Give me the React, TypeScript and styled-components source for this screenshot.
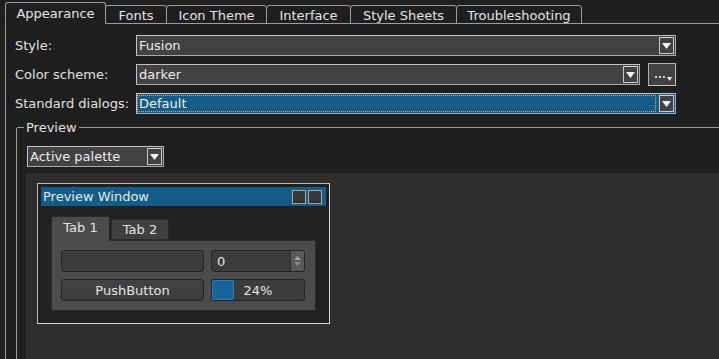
import React from "react";
import styled, { createGlobalStyle } from "styled-components";

const GlobalStyle = createGlobalStyle`
    html, body {
        margin: 0;
        padding: 0;
        background: #201f20;
        overflow: hidden;
    }

    body {
        font-family: "DejaVu Sans", "Liberation Sans", sans-serif;
        font-size: 13px;
        color: #e2e2e2;
    }
`;

const Page = styled.div`
    width: 719px;
    height: 359px;
    box-sizing: border-box;
    padding: 3px 0 0 5px;
    display: flex;
    flex-direction: column;
    overflow: hidden;
`;

const TabBar = styled.div`
    display: flex;
    align-items: flex-end;
    height: 21px;
    margin-bottom: -1px;
    position: relative;
    z-index: 1;
`;

const Tab = styled.div<{ active?: boolean; w: number }>`
    box-sizing: border-box;
    width: ${(p): number => p.w}px;
    height: ${(p): string => (p.active ? "22px" : "19px")};
    margin-left: -1px;
    border: 1px solid #9c9c9c;
    border-bottom: ${(p): string => (p.active ? "1px solid #201f20" : "1px solid #9c9c9c")};
    border-radius: 3px 3px 0 0;
    background: #201f20;
    display: flex;
    align-items: center;
    justify-content: center;
    line-height: 15px;
    padding-top: ${(p): string => (p.active ? "1px" : "2px")};
    color: #e4e4e4;

    &:first-child {
        margin-left: 0;
    }
`;

const Pane = styled.div`
    flex: 1;
    border-left: 1px solid #9c9c9c;
    border-top: 1px solid #9c9c9c;
    padding-top: 11px;
    display: flex;
    flex-direction: column;
`;

const FormGrid = styled.div`
    display: grid;
    grid-template-columns: 121px 1fr;
    row-gap: 7px;
    padding: 0 43px 0 9px;
    align-items: center;
`;

const Label = styled.div`
    line-height: 21px;
    color: #e0e0e0;
`;

const FieldRow = styled.div`
    display: flex;
    gap: 8px;
    align-items: center;
`;

const ComboBox = styled.div<{ selected?: boolean; w?: number }>`
    box-sizing: border-box;
    height: 21px;
    ${(p): string => (p.w ? `width: ${p.w}px;` : "flex: 1;")}
    border: 1px solid #c4c4c4;
    border-right-color: #aaaaaa;
    border-bottom-color: #aaaaaa;
    background: ${(p): string => (p.selected ? "#135e88" : "#434243")};
    display: flex;
    align-items: stretch;
    padding: 1px;
`;

const ComboText = styled.div<{ focus?: boolean }>`
    flex: 1;
    display: flex;
    align-items: center;
    padding-left: 1px;
    line-height: 15px;
    color: #ececec;
    border: 1px dotted ${(p): string => (p.focus ? "#e0a070" : "transparent")};
    margin: 0 3px 0 -1px;
`;

const ArrowBox = styled.div`
    box-sizing: border-box;
    width: 15px;
    border: 1px solid #c8c8c8;
    border-top-color: #d6d6d6;
    background: #434243;
    display: flex;
    align-items: center;
    justify-content: center;
`;

const DotsButton = styled.div`
    box-sizing: border-box;
    width: 28px;
    height: 23px;
    border: 1px solid #c4c4c4;
    border-top-color: #b0b0b0;
    border-left-color: #b0b0b0;
    background: #434243;
    display: flex;
    align-items: flex-end;
    justify-content: flex-end;
    padding: 0 3px 4px 0;
    gap: 1px;
`;

const Dot = styled.span`
    width: 2px;
    height: 2px;
    margin: 0 1px 3px 0;
    background: #cfcfcf;
`;

const Group = styled.div`
    margin: 14px 0 0 10px;
    border-left: 1px solid #9c9c9c;
    flex: 1;
    display: flex;
    flex-direction: column;
    padding-left: 9px;
`;

const GroupHeader = styled.div`
    display: flex;
    align-items: center;
    height: 15px;
    margin: -8px 0 0 -9px;
    line-height: 15px;

    &::before {
        content: "";
        width: 7px;
        border-top: 1px solid #9c9c9c;
    }

    &::after {
        content: "";
        flex: 1;
        border-top: 1px solid #9c9c9c;
    }
`;

const GroupTitle = styled.span`
    padding: 0 2px;
    color: #e0e0e0;
`;

const PaletteRow = styled.div`
    margin: 11px 0 0 1px;
    display: flex;
`;

const PreviewArea = styled.div`
    margin-top: 6px;
    flex: 1;
    background: #2f2e2c;
    padding: 10px 0 0 11px;
`;

const Window = styled.div`
    width: 293px;
    box-sizing: border-box;
    border: 1px solid #bcbcbc;
    border-right-color: #d8d8d8;
    border-bottom-color: #d8d8d8;
    background: #222122;
    padding: 3px;
`;

const TitleBar = styled.div`
    height: 19px;
    background: #135e88;
    display: flex;
    align-items: center;
    padding: 0 4px 0 2px;
    gap: 2px;
    color: #e8e8e8;
`;

const TitleText = styled.span`
    flex: 1;
`;

const TitleButton = styled.div`
    box-sizing: border-box;
    width: 14px;
    height: 14px;
    border: 1px solid #a8a8a8;
    background: #3a393a;
    box-shadow: inset 0 -2px 0 #2e2d2e;
`;

const WindowBody = styled.div`
    padding: 10px 10px 9px 10px;
`;

const InnerTabs = styled.div`
    display: flex;
    align-items: flex-end;
    height: 25px;
    margin-bottom: -1px;
    position: relative;
`;

const InnerTab = styled.div<{ active?: boolean; w: number }>`
    box-sizing: border-box;
    width: ${(p): number => p.w}px;
    height: ${(p): string => (p.active ? "25px" : "21px")};
    margin: 0 1px ${(p): string => (p.active ? "0" : "1px")} 0;
    border: 1px solid #2b2a2b;
    border-bottom: ${(p): string => (p.active ? "none" : "1px solid #2b2a2b")};
    border-radius: 2px 2px 0 0;
    background: ${(p): string => (p.active ? "#4d4c4d" : "#414041")};
    display: flex;
    align-items: center;
    justify-content: center;
    padding-bottom: ${(p): string => (p.active ? "3px" : "0")};
    color: #e4e4e4;
`;

const InnerPane = styled.div`
    border: 1px solid #2b2a2b;
    background: #4d4c4d;
    padding: 9px;
    display: grid;
    grid-template-columns: 143px 94px;
    grid-auto-rows: 22px;
    gap: 7px;
`;

const Field = styled.div`
    box-sizing: border-box;
    border: 1px solid #252425;
    border-radius: 3px;
    background: #3d3c3d;
    display: flex;
    align-items: stretch;
    overflow: hidden;
`;

const SpinText = styled.div`
    flex: 1;
    display: flex;
    align-items: center;
    padding-left: 5px;
    color: #e4e4e4;
`;

const SpinButtons = styled.div`
    width: 13px;
    background: #5c5b5c;
    border-left: 1px solid #2e2d2e;
    display: flex;
    flex-direction: column;
    align-items: center;
    justify-content: center;
    gap: 2px;
`;

const PushButton = styled.div`
    box-sizing: border-box;
    border: 1px solid #252425;
    border-radius: 3px;
    background: linear-gradient(#444344, #3d3c3d);
    display: flex;
    align-items: center;
    justify-content: center;
    color: #e4e4e4;
`;

const Progress = styled.div`
    box-sizing: border-box;
    border: 1px solid #252425;
    border-radius: 3px;
    background: #3d3c3d;
    position: relative;
    display: flex;
    align-items: center;
    justify-content: center;
    color: #e4e4e4;
`;

const Chunk = styled.div`
    position: absolute;
    left: 0;
    top: 0;
    bottom: 0;
    box-sizing: border-box;
    background: #17649a;
    border: 1px solid #2a80b8;
    border-radius: 2px;
`;

const ProgressLabel = styled.span`
    position: relative;
`;

const DownArrow: React.FC<{ size?: number }> = ({ size = 9 }) => (
    <svg width={size} height={Math.ceil(size / 2) + 1} viewBox={`0 0 ${size} ${Math.ceil(size / 2) + 1}`}>
        <polygon points={`0,0 ${size},0 ${size / 2},${Math.ceil(size / 2) + 1}`} fill="#f4f4f4" />
    </svg>
);

const Combo: React.FC<{ text: string; selected?: boolean; w?: number }> = ({ text, selected, w }) => (
    <ComboBox selected={selected} w={w}>
        <ComboText focus={selected}>{text}</ComboText>
        <ArrowBox>
            <DownArrow />
        </ArrowBox>
    </ComboBox>
);

const tabs = [
    { name: "Appearance", w: 101 },
    { name: "Fonts", w: 62 },
    { name: "Icon Theme", w: 101 },
    { name: "Interface", w: 85 },
    { name: "Style Sheets", w: 107 },
    { name: "Troubleshooting", w: 126 }
];

const progress = 24;

const App: React.FC = (): React.ReactElement => {
    return (
        <>
            <GlobalStyle />
            <Page>
                <TabBar>
                    {tabs.map((t, i) => (
                        <Tab key={t.name} w={t.w} active={i === 0}>
                            {t.name}
                        </Tab>
                    ))}
                </TabBar>
                <Pane>
                    <FormGrid>
                        <Label>Style:</Label>
                        <Combo text="Fusion" />
                        <Label>Color scheme:</Label>
                        <FieldRow>
                            <Combo text="darker" />
                            <DotsButton>
                                <Dot />
                                <Dot />
                                <Dot />
                                <DownArrow size={5} />
                            </DotsButton>
                        </FieldRow>
                        <Label>Standard dialogs:</Label>
                        <Combo text="Default" selected />
                    </FormGrid>
                    <Group>
                        <GroupHeader>
                            <GroupTitle>Preview</GroupTitle>
                        </GroupHeader>
                        <PaletteRow>
                            <Combo text="Active palette" w={137} />
                        </PaletteRow>
                        <PreviewArea>
                            <Window>
                                <TitleBar>
                                    <TitleText>Preview Window</TitleText>
                                    <TitleButton />
                                    <TitleButton />
                                </TitleBar>
                                <WindowBody>
                                    <InnerTabs>
                                        <InnerTab active w={59}>
                                            Tab 1
                                        </InnerTab>
                                        <InnerTab w={58}>Tab 2</InnerTab>
                                    </InnerTabs>
                                    <InnerPane>
                                        <Field />
                                        <Field>
                                            <SpinText>0</SpinText>
                                            <SpinButtons>
                                                <svg width="7" height="4" viewBox="0 0 7 4">
                                                    <polygon points="0,4 7,4 3.5,0" fill="#a4a4a4" />
                                                </svg>
                                                <svg width="7" height="4" viewBox="0 0 7 4">
                                                    <polygon points="0,0 7,0 3.5,4" fill="#8a8a8a" />
                                                </svg>
                                            </SpinButtons>
                                        </Field>
                                        <PushButton>PushButton</PushButton>
                                        <Progress>
                                            <Chunk style={{ width: `${progress}%` }} />
                                            <ProgressLabel>{progress}%</ProgressLabel>
                                        </Progress>
                                    </InnerPane>
                                </WindowBody>
                            </Window>
                        </PreviewArea>
                    </Group>
                </Pane>
            </Page>
        </>
    );
};

export default App;
